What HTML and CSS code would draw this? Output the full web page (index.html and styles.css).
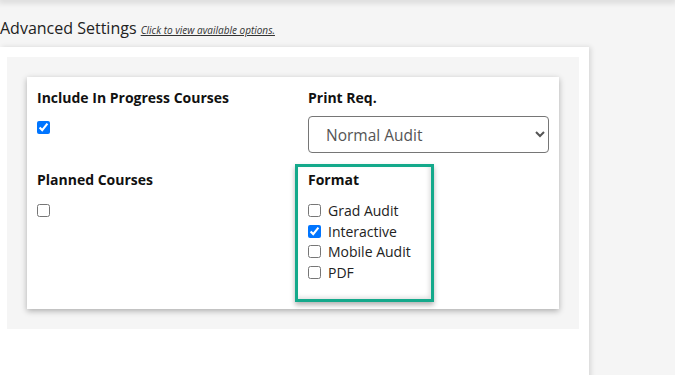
FILE: index.html
```html
<!DOCTYPE html>
<html lang="en">
<head>
<meta charset="UTF-8">
<meta name="viewport" content="width=device-width, initial-scale=1.0">
<title>Advanced Settings</title>
<link rel="stylesheet" href="styles.css">
</head>
<body>
<div class="topbar"></div>

<div class="main">
  <h1 class="section-title">Advanced Settings <a href="#" class="help-link">Click to view available options.</a></h1>

  <div class="panel">
    <div class="inner">
      <div class="card">
        <div class="field">
          <label class="field-label" for="inprogress">Include In Progress Courses</label>
          <input type="checkbox" id="inprogress" class="single-check" checked>
        </div>

        <div class="field field-right">
          <label class="field-label" for="printreq">Print Req.</label>
          <select id="printreq" class="audit-select">
            <option>Normal Audit</option>
            <option>All Requirements</option>
          </select>
        </div>

        <div class="field field-low">
          <label class="field-label" for="planned">Planned Courses</label>
          <input type="checkbox" id="planned" class="single-check">
        </div>

        <div class="format-box">
          <div class="field-label">Format</div>
          <div class="options">
            <label class="option"><input type="checkbox"> Grad Audit</label>
            <label class="option"><input type="checkbox" checked> Interactive</label>
            <label class="option"><input type="checkbox"> Mobile Audit</label>
            <label class="option"><input type="checkbox"> PDF</label>
          </div>
        </div>
      </div>
    </div>
  </div>
</div>
</body>
</html>
```

FILE: styles.css
```css
body {
  font-family: 'Open Sans', 'Noto Sans', sans-serif;
  background: #f5f5f5;
  color: #222;
  margin: 0;
  padding: 0;
  height: 375px;
  overflow: hidden;
}

.topbar {
  height: 0;
  box-shadow: 0 0 6px 2px rgba(0, 0, 0, 0.18);
}

.main {
  width: 589px;
}

.section-title {
  font-size: 16px;
  font-weight: normal;
  line-height: 24px;
  margin: 16px 0 7px 0;
  color: #222;
}

.help-link {
  font-size: 10px;
  line-height: 1;
  font-style: italic;
  color: #333;
  text-decoration: underline;
}

.panel {
  background: #fff;
  padding: 10px 10px 60px 7px;
  box-shadow: 2px 0 5px rgba(0, 0, 0, 0.12);
}

.inner {
  background: #f5f5f5;
  padding: 20px;
}

.card {
  background: #fff;
  box-shadow: 0 2px 6px rgba(0, 0, 0, 0.3);
  padding: 11px 10px 7px;
  display: grid;
  grid-template-columns: 258px 1fr;
  row-gap: 11px;
  align-items: start;
}

.field {
  display: flex;
  flex-direction: column;
  align-items: flex-start;
}

.field-right {
  padding-left: 13px;
}

.field-low {
  padding-top: 6px;
}

.field-label {
  font-size: 14px;
  font-weight: bold;
  line-height: 20px;
  color: #111;
}

.single-check {
  width: 13px;
  height: 13px;
  margin: 13px 0 0;
}

.field-low .single-check {
  margin-top: 14px;
}

.audit-select {
  width: 241px;
  height: 37px;
  margin-top: 8px;
  padding: 0 8px 0 13px;
  font-family: 'Open Sans', sans-serif;
  font-size: 15.5px;
  color: #555;
  background: #fff;
  border: 1px solid #767676;
  border-radius: 4px;
}

.format-box {
  width: 139px;
  box-sizing: border-box;
  border: 3px solid #14a98b;
  padding: 3px 10px 16px;
  box-shadow: 0 3px 5px rgba(0, 0, 0, 0.3), inset -2px -2px 4px rgba(0, 0, 0, 0.12);
}

.options {
  margin-top: 10px;
}

.option {
  display: flex;
  align-items: center;
  height: 20.7px;
  font-size: 14px;
  color: #222;
  white-space: nowrap;
}

.option input {
  width: 13px;
  height: 13px;
  margin: 0 7px 0 0;
}
```
